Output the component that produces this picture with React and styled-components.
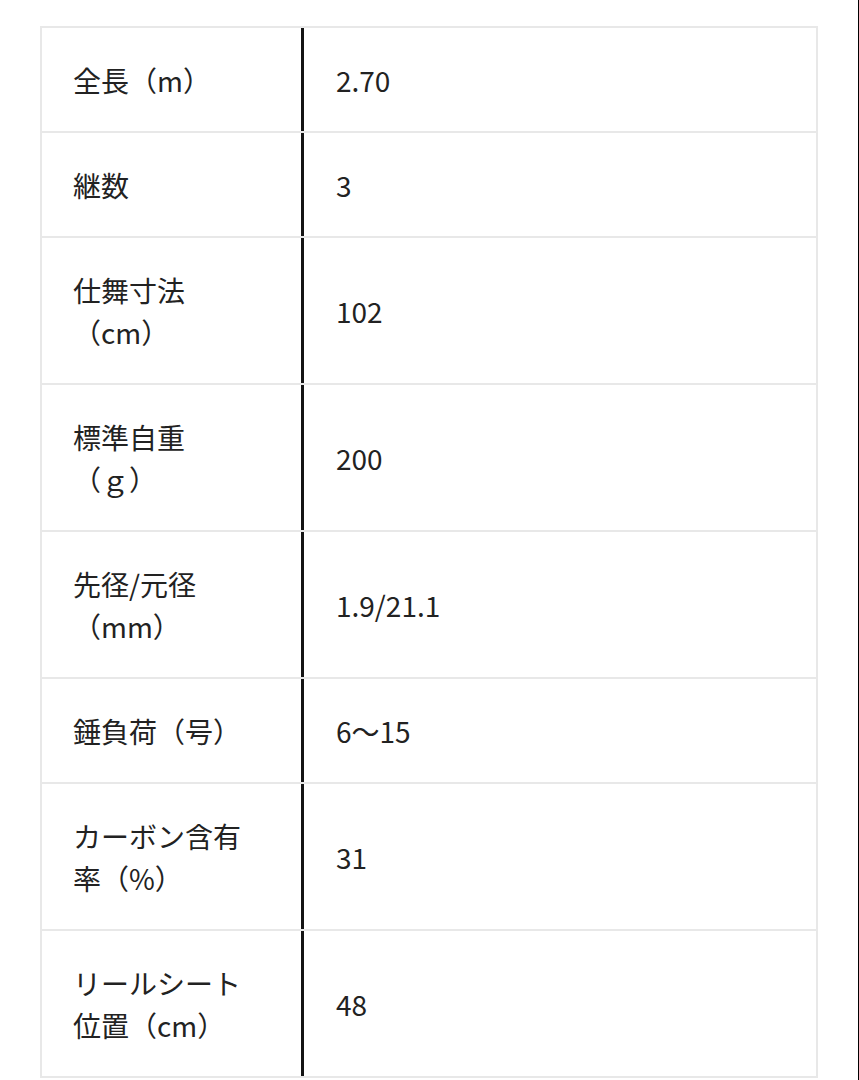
import React from 'react';
import styled, {createGlobalStyle} from "styled-components";

const GlobalStyle = createGlobalStyle`
    html, body {
        margin: 0;
        padding: 0;
        background: #fff;
    }
    body {
        font-family: "Noto Sans CJK JP", "Noto Sans", sans-serif;
        color: #222;
    }
`

const Page = styled.div`
    box-sizing: border-box;
    width: 859px;
    min-height: 1080px;
    padding: 26px 0 0 40px;
    border-right: 1px solid #000;
`

const SpecTable = styled.div`
    width: 778px;
    border: 2px solid #e8e8e8;
    box-sizing: border-box;
`

const Row = styled.div`
    display: grid;
    grid-template-columns: 259px 1fr;
    border-top: ${props => props.$first ? 'none' : '2px solid #e8e8e8'};
`

const Label = styled.div`
    padding: 30.5px 48px 30.5px 31px;
    font-size: 28px;
    line-height: 42px;
    display: flex;
    align-items: center;
`

const Value = styled.div`
    border-left: 3px solid #141414;
    padding: 30.5px 32px;
    font-size: 28px;
    line-height: 42px;
    display: flex;
    align-items: center;
`

const specs = [
    {label: '全長（m）', value: '2.70'},
    {label: '継数', value: '3'},
    {label: '仕舞寸法（cm）', value: '102'},
    {label: '標準自重（ｇ）', value: '200'},
    {label: '先径/元径（mm）', value: '1.9/21.1'},
    {label: '錘負荷（号）', value: '6〜15'},
    {label: 'カーボン含有率（%）', value: '31'},
    {label: 'リールシート位置（cm）', value: '48'},
];

function App() {
    return (
        <>
            <GlobalStyle/>
            <Page>
                <SpecTable>
                    {specs.map((spec, i) => (
                        <Row key={spec.label} $first={i === 0}>
                            <Label>{spec.label}</Label>
                            <Value>{spec.value}</Value>
                        </Row>
                    ))}
                </SpecTable>
            </Page>
        </>
    )
}

export default App;
